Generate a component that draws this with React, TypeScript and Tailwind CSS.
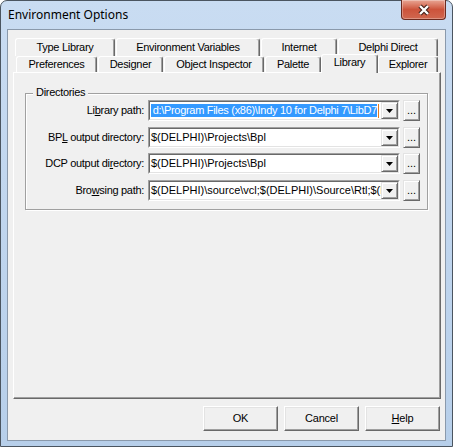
import React from "react";

const ui = "font-['Liberation_Sans',Arial,sans-serif] text-[11px] text-black";

function Tab({ label, className, selected = false }: { label: string; className: string; selected?: boolean }) {
  return (
    <div
      className={`${className} flex shrink-0 justify-center rounded-t-[3px] border-l border-t border-r border-l-white border-t-white border-r-[#696969] bg-[#f0f0f0] shadow-[inset_-1px_0_0_#a0a0a0] leading-[13px] tracking-[-0.3px] ${
        selected ? "relative z-10 -mt-[2px] h-[19px] items-start pt-[1px]" : "items-center"
      }`}
    >
      {label}
    </div>
  );
}

function DropButton() {
  return (
    <div className="flex h-full w-[17px] shrink-0 items-center justify-center border border-t-[#e3e3e3] border-l-[#e3e3e3] border-r-[#696969] border-b-[#696969] bg-[#f0f0f0] shadow-[inset_1px_1px_0_#fff,inset_-1px_-1px_0_#a0a0a0]">
      <svg width="7" height="4" viewBox="0 0 7 4">
        <polygon points="0,0 7,0 3.5,4" fill="#000" />
      </svg>
    </div>
  );
}

function Combo({ children, right = false }: { children: React.ReactNode; right?: boolean }) {
  return (
    <div className="ml-[4px] h-[21px] w-[252px] shrink-0 border border-t-[#a0a0a0] border-l-[#a0a0a0] border-r-white border-b-white">
      <div className="flex h-full border border-t-[#696969] border-l-[#696969] border-r-[#e3e3e3] border-b-[#e3e3e3] bg-white">
        <div
          className={`flex min-w-0 flex-1 items-center overflow-hidden whitespace-nowrap pl-[1px] leading-[13px] ${
            right ? "justify-end" : ""
          }`}
        >
          {children}
        </div>
        <DropButton />
      </div>
    </div>
  );
}

function Row({
  label,
  className,
  right = false,
  children,
}: {
  label: React.ReactNode;
  className: string;
  right?: boolean;
  children: React.ReactNode;
}) {
  return (
    <div className={`flex h-[21px] items-center ${className}`}>
      <div className="w-[118px] shrink-0 text-right leading-[13px] tracking-[-0.3px]">{label}</div>
      <Combo right={right}>{children}</Combo>
      <div className="ml-[3px] flex h-[21px] w-[17px] shrink-0 items-center justify-center border border-t-[#e3e3e3] border-l-[#e3e3e3] border-r-[#696969] border-b-[#696969] bg-[#f0f0f0] leading-[13px] shadow-[inset_1px_1px_0_#fff,inset_-1px_-1px_0_#a0a0a0]">
        ...
      </div>
    </div>
  );
}

function Button({ children }: { children: React.ReactNode }) {
  return (
    <div className="flex h-[25px] w-[75px] items-center justify-center border border-t-white border-l-white border-r-[#696969] border-b-[#696969] bg-[#f0f0f0] leading-[13px] tracking-[-0.2px] shadow-[inset_-1px_-1px_0_#a0a0a0,inset_1px_1px_0_#e3e3e3]">
      {children}
    </div>
  );
}

export default function App() {
  return (
    <div className={`h-[447px] w-[453px] bg-white ${ui}`}>
      <div className="relative flex h-[447px] w-[453px] flex-col rounded-t-[7px] border border-[#4b5560] bg-gradient-to-b from-[#c9dcf2] to-[#b7cfea]">
        {/* title bar */}
        <div className="flex h-[28px] shrink-0 items-center pl-[7px] font-['Noto_Sans',sans-serif] text-[12px] text-black">
          Environment Options
        </div>
        <div className="absolute -top-[1px] right-[6px] flex h-[20px] w-[45px] items-center justify-center rounded-b-[4px] border border-t-0 border-[#6b2a1f] bg-gradient-to-b from-[#e8a594] via-[#cc533b] to-[#d0674f] shadow-[inset_0_0_0_1px_rgba(255,255,255,0.3)]">
          <svg width="14" height="12" viewBox="0 0 14 12">
            <path d="M3 2 L11 10 M11 2 L3 10" stroke="#3d1c16" strokeWidth="4.4" />
            <path d="M3 2 L11 10 M11 2 L3 10" stroke="#fff" strokeWidth="2.4" />
          </svg>
        </div>

        {/* client area */}
        <div className="mx-[6px] mb-[5px] flex flex-1 flex-col border border-[#8a99ab] bg-[#f0f0f0]">
          <div className="ml-[5px] mt-[8px] w-[428px]">
            <div className="flex h-[18px] pl-[2px]">
              <Tab label="Type Library" className="h-[18px] w-[100px]" />
              <Tab label="Environment Variables" className="ml-[1px] h-[18px] w-[144px]" />
              <Tab label="Internet" className="ml-[1px] h-[18px] w-[76px]" />
              <Tab label="Delphi Direct" className="ml-[1px] h-[18px] w-[100px]" />
            </div>
            <div className="flex h-[16px] items-start pl-[3px]">
              <Tab label="Preferences" className="h-[16px] w-[81px]" />
              <Tab label="Designer" className="ml-[1px] h-[16px] w-[65px]" />
              <Tab label="Object Inspector" className="ml-[1px] h-[16px] w-[100px]" />
              <Tab label="Palette" className="ml-[1px] h-[16px] w-[56px]" />
              <Tab label="Library" className="w-[57px]" selected />
              <Tab label="Explorer" className="h-[16px] w-[60px]" />
            </div>
            <div className="h-[327px] w-[428px] border border-t-white border-l-white border-r-[#696969] border-b-[#696969] pl-[11px] pt-[20px] shadow-[inset_-1px_-1px_0_#a0a0a0]">
              <div className="relative h-[117px] w-[403px] border border-[#a0a0a0] pt-[6px] shadow-[1px_1px_0_#fff,inset_1px_1px_0_#fff]">
                <span className="absolute -top-[8px] left-[7px] bg-[#f0f0f0] px-[3px] leading-[13px] tracking-[-0.3px]">
                  Directories
                </span>
                <Row
                  className=""
                  right
                  label={
                    <>
                      Li<u>b</u>rary path:
                    </>
                  }
                >
                  <span className="block shrink-0 grow bg-[#3399ff] text-right tracking-[-0.3px] text-white">
                    d:\Program Files (x86)\Indy 10 for Delphi 7\LibD7
                  </span>
                  <span className="ml-[1px] h-[14px] w-[1px] shrink-0 bg-[#e2791f]" />
                  <span className="w-[2px] shrink-0" />
                </Row>
                <Row
                  className="mt-[6px]"
                  label={
                    <>
                      BP<u>L</u> output directory:
                    </>
                  }
                >
                  $(DELPHI)\Projects\Bpl
                </Row>
                <Row
                  className="mt-[5px]"
                  label={
                    <>
                      DCP output di<u>r</u>ectory:
                    </>
                  }
                >
                  $(DELPHI)\Projects\Bpl
                </Row>
                <Row
                  className="mt-[6px]"
                  label={
                    <>
                      Bro<u>w</u>sing path:
                    </>
                  }
                >
                  $(DELPHI)\source\vcl;$(DELPHI)\Source\Rtl;$(DELPHI)\Source\Internet
                </Row>
              </div>
            </div>
          </div>

          <div className="mt-[7px] flex justify-end gap-[6px] pr-[5px]">
            <Button>OK</Button>
            <Button>Cancel</Button>
            <Button>
              <u>H</u>elp
            </Button>
          </div>
        </div>
      </div>
    </div>
  );
}
